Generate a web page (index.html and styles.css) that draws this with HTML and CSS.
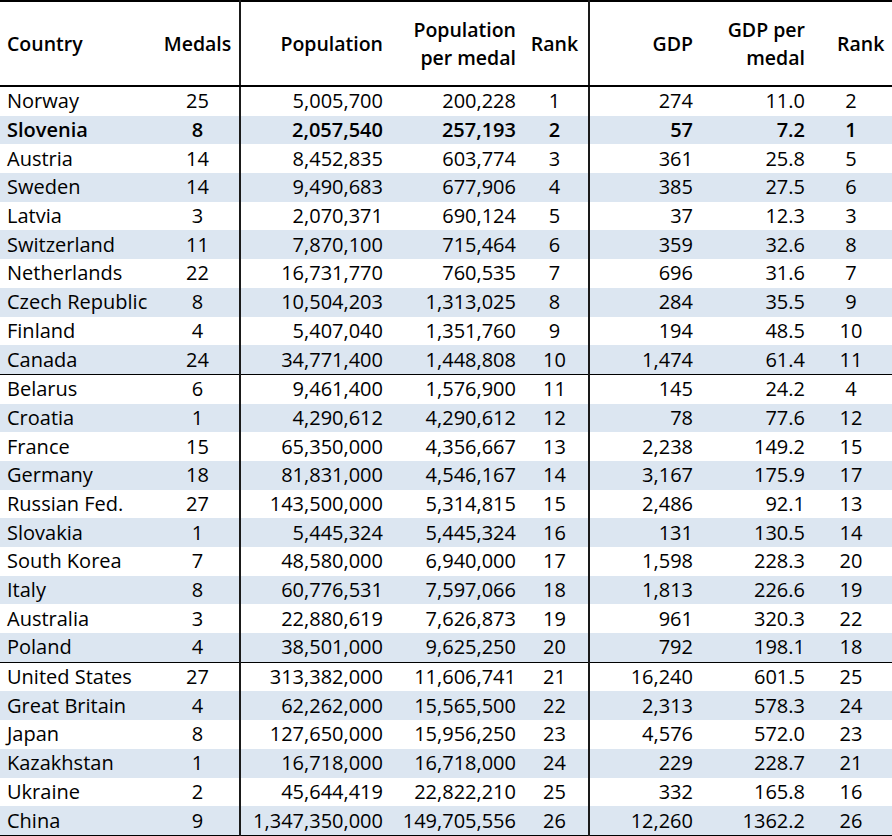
FILE: index.html
```html
<!DOCTYPE html>
<html lang="en">
<head>
<meta charset="utf-8">
<title>Medals per population and GDP</title>
<link rel="stylesheet" href="styles.css">
</head>
<body>
<table class="medals">
  <colgroup>
    <col class="w-country">
    <col class="w-medals split">
    <col class="w-pop">
    <col class="w-popm">
    <col class="w-rank split">
    <col class="w-gdp">
    <col class="w-gdpm">
    <col class="w-rank2">
  </colgroup>
  <thead>
    <tr>
      <th class="c">Country</th>
      <th class="r">Medals</th>
      <th class="n">Population</th>
      <th class="n">Population<br>per medal</th>
      <th class="r">Rank</th>
      <th class="n">GDP</th>
      <th class="n">GDP per<br>medal</th>
      <th class="r last">Rank</th>
    </tr>
  </thead>
  <tbody>
    <tr><td class="c">Norway</td><td class="r">25</td><td class="n">5,005,700</td><td class="n">200,228</td><td class="r">1</td><td class="n">274</td><td class="n">11.0</td><td class="r">2</td></tr>
    <tr class="band bold"><td class="c">Slovenia</td><td class="r">8</td><td class="n">2,057,540</td><td class="n">257,193</td><td class="r">2</td><td class="n">57</td><td class="n">7.2</td><td class="r">1</td></tr>
    <tr><td class="c">Austria</td><td class="r">14</td><td class="n">8,452,835</td><td class="n">603,774</td><td class="r">3</td><td class="n">361</td><td class="n">25.8</td><td class="r">5</td></tr>
    <tr class="band"><td class="c">Sweden</td><td class="r">14</td><td class="n">9,490,683</td><td class="n">677,906</td><td class="r">4</td><td class="n">385</td><td class="n">27.5</td><td class="r">6</td></tr>
    <tr><td class="c">Latvia</td><td class="r">3</td><td class="n">2,070,371</td><td class="n">690,124</td><td class="r">5</td><td class="n">37</td><td class="n">12.3</td><td class="r">3</td></tr>
    <tr class="band"><td class="c">Switzerland</td><td class="r">11</td><td class="n">7,870,100</td><td class="n">715,464</td><td class="r">6</td><td class="n">359</td><td class="n">32.6</td><td class="r">8</td></tr>
    <tr><td class="c">Netherlands</td><td class="r">22</td><td class="n">16,731,770</td><td class="n">760,535</td><td class="r">7</td><td class="n">696</td><td class="n">31.6</td><td class="r">7</td></tr>
    <tr class="band"><td class="c">Czech Republic</td><td class="r">8</td><td class="n">10,504,203</td><td class="n">1,313,025</td><td class="r">8</td><td class="n">284</td><td class="n">35.5</td><td class="r">9</td></tr>
    <tr><td class="c">Finland</td><td class="r">4</td><td class="n">5,407,040</td><td class="n">1,351,760</td><td class="r">9</td><td class="n">194</td><td class="n">48.5</td><td class="r">10</td></tr>
    <tr class="band group-end"><td class="c">Canada</td><td class="r">24</td><td class="n">34,771,400</td><td class="n">1,448,808</td><td class="r">10</td><td class="n">1,474</td><td class="n">61.4</td><td class="r">11</td></tr>
    <tr><td class="c">Belarus</td><td class="r">6</td><td class="n">9,461,400</td><td class="n">1,576,900</td><td class="r">11</td><td class="n">145</td><td class="n">24.2</td><td class="r">4</td></tr>
    <tr class="band"><td class="c">Croatia</td><td class="r">1</td><td class="n">4,290,612</td><td class="n">4,290,612</td><td class="r">12</td><td class="n">78</td><td class="n">77.6</td><td class="r">12</td></tr>
    <tr><td class="c">France</td><td class="r">15</td><td class="n">65,350,000</td><td class="n">4,356,667</td><td class="r">13</td><td class="n">2,238</td><td class="n">149.2</td><td class="r">15</td></tr>
    <tr class="band"><td class="c">Germany</td><td class="r">18</td><td class="n">81,831,000</td><td class="n">4,546,167</td><td class="r">14</td><td class="n">3,167</td><td class="n">175.9</td><td class="r">17</td></tr>
    <tr><td class="c">Russian Fed.</td><td class="r">27</td><td class="n">143,500,000</td><td class="n">5,314,815</td><td class="r">15</td><td class="n">2,486</td><td class="n">92.1</td><td class="r">13</td></tr>
    <tr class="band"><td class="c">Slovakia</td><td class="r">1</td><td class="n">5,445,324</td><td class="n">5,445,324</td><td class="r">16</td><td class="n">131</td><td class="n">130.5</td><td class="r">14</td></tr>
    <tr><td class="c">South Korea</td><td class="r">7</td><td class="n">48,580,000</td><td class="n">6,940,000</td><td class="r">17</td><td class="n">1,598</td><td class="n">228.3</td><td class="r">20</td></tr>
    <tr class="band"><td class="c">Italy</td><td class="r">8</td><td class="n">60,776,531</td><td class="n">7,597,066</td><td class="r">18</td><td class="n">1,813</td><td class="n">226.6</td><td class="r">19</td></tr>
    <tr><td class="c">Australia</td><td class="r">3</td><td class="n">22,880,619</td><td class="n">7,626,873</td><td class="r">19</td><td class="n">961</td><td class="n">320.3</td><td class="r">22</td></tr>
    <tr class="band group-end"><td class="c">Poland</td><td class="r">4</td><td class="n">38,501,000</td><td class="n">9,625,250</td><td class="r">20</td><td class="n">792</td><td class="n">198.1</td><td class="r">18</td></tr>
    <tr><td class="c">United States</td><td class="r">27</td><td class="n">313,382,000</td><td class="n">11,606,741</td><td class="r">21</td><td class="n">16,240</td><td class="n">601.5</td><td class="r">25</td></tr>
    <tr class="band"><td class="c">Great Britain</td><td class="r">4</td><td class="n">62,262,000</td><td class="n">15,565,500</td><td class="r">22</td><td class="n">2,313</td><td class="n">578.3</td><td class="r">24</td></tr>
    <tr><td class="c">Japan</td><td class="r">8</td><td class="n">127,650,000</td><td class="n">15,956,250</td><td class="r">23</td><td class="n">4,576</td><td class="n">572.0</td><td class="r">23</td></tr>
    <tr class="band"><td class="c">Kazakhstan</td><td class="r">1</td><td class="n">16,718,000</td><td class="n">16,718,000</td><td class="r">24</td><td class="n">229</td><td class="n">228.7</td><td class="r">21</td></tr>
    <tr><td class="c">Ukraine</td><td class="r">2</td><td class="n">45,644,419</td><td class="n">22,822,210</td><td class="r">25</td><td class="n">332</td><td class="n">165.8</td><td class="r">16</td></tr>
    <tr class="band"><td class="c">China</td><td class="r">9</td><td class="n">1,347,350,000</td><td class="n">149,705,556</td><td class="r">26</td><td class="n">12,260</td><td class="n">1362.2</td><td class="r">26</td></tr>
  </tbody>
</table>
</body>
</html>
```
FILE: styles.css
```css
html, body {
  margin: 0;
  padding: 0;
  background: #ffffff;
}

body {
  font-family: "Open Sans", "Noto Sans", sans-serif;
  font-size: 20px;
  color: #000000;
}

.medals {
  border-collapse: collapse;
  table-layout: fixed;
  width: 892px;
  border-top: 2px solid #000000;
  border-bottom: 2px solid #000000;
}

.w-country { width: 156px; }
.w-medals { width: 84px; }
.w-pop { width: 148px; }
.w-popm { width: 133px; }
.w-rank { width: 68px; }
.w-gdp { width: 109px; }
.w-gdpm { width: 112px; }
.w-rank2 { width: 82px; }

.split {
  border-right: 2px solid #1a1a1a;
}

.medals th {
  height: 83px;
  padding: 0 5px;
  font-size: 19.5px;
  font-weight: 600;
  line-height: 28px;
  vertical-align: middle;
  border-bottom: 2px solid #000000;
  white-space: nowrap;
}

.medals td {
  height: 28.7px;
  padding: 0 5px;
  line-height: 24px;
  vertical-align: middle;
  white-space: nowrap;
}

.medals .c {
  text-align: left;
  padding-left: 7px;
}

.medals .n {
  text-align: right;
}

.medals .r {
  text-align: center;
}

.medals th.last {
  text-align: left;
  padding-left: 27px;
}

.band td {
  background: #dce6f1;
}

.bold td {
  font-weight: 600;
}

.group-end td {
  border-bottom: 1px solid #000000;
}
```
